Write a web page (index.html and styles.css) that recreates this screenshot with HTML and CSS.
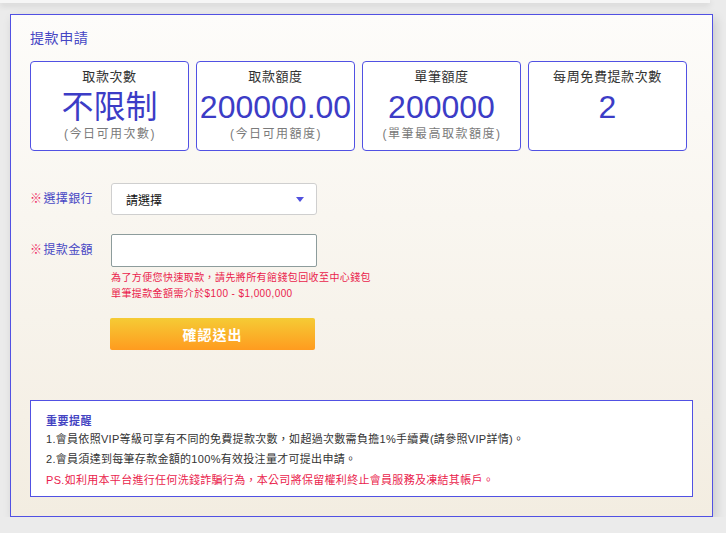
FILE: index.html
```html
<!DOCTYPE html>
<html lang="zh-Hant">
<head>
<meta charset="utf-8">
<title>提款申請</title>
<link rel="stylesheet" href="styles.css">
</head>
<body>
<div class="topbar"></div>
<div class="panel">
  <h2 class="title">提款申請</h2>
  <div class="cards">
    <div class="card">
      <div class="card-label">取款次數</div>
      <div class="card-value">不限制</div>
      <div class="card-sub">(今日可用次數)</div>
    </div>
    <div class="card">
      <div class="card-label">取款額度</div>
      <div class="card-value">200000.00</div>
      <div class="card-sub">(今日可用額度)</div>
    </div>
    <div class="card">
      <div class="card-label">單筆額度</div>
      <div class="card-value">200000</div>
      <div class="card-sub">(單筆最高取款額度)</div>
    </div>
    <div class="card">
      <div class="card-label">每周免費提款次數</div>
      <div class="card-value">2</div>
    </div>
  </div>

  <div class="form">
    <div class="row">
      <label class="label"><span class="mark">※</span>選擇銀行</label>
      <div class="select">
        <span>請選擇</span>
        <svg class="arrow" width="8" height="5" viewBox="0 0 8 5"><path d="M0 0H8L4 5Z" fill="#5151de"/></svg>
      </div>
    </div>
    <div class="row row-amount">
      <label class="label"><span class="mark">※</span>提款金額</label>
      <div class="field">
        <input class="input" type="text">
        <p class="note">為了方便您快速取款，請先將所有館錢包回收至中心錢包</p>
        <p class="note">單筆提款金額需介於$100 - $1,000,000</p>
        <button class="submit" type="button">確認送出</button>
      </div>
    </div>
  </div>

  <div class="notice">
    <div class="notice-title">重要提醒</div>
    <p class="notice-line">1.會員依照VIP等級可享有不同的免費提款次數，如超過次數需負擔1%手續費(請參照VIP詳情)。</p>
    <p class="notice-line">2.會員須達到每筆存款金額的100%有效投注量才可提出申請。</p>
    <p class="notice-line ps">PS.如利用本平台進行任何洗錢詐騙行為，本公司將保留權利終止會員服務及凍結其帳戶。</p>
  </div>
</div>
</body>
</html>
```

FILE: styles.css
```css
* { box-sizing: border-box; }

body {
  margin: 0;
  background: #ebebeb;
  font-family: "Liberation Sans", "Noto Sans CJK TC", sans-serif;
  color: #333;
}

.topbar {
  width: 710px;
  height: 3px;
  background: #f6f6f6;
  box-shadow: 0 2px 6px rgba(0, 0, 0, 0.16);
}

.panel {
  width: 703px;
  height: 503px;
  margin: 11px 0 0 10px;
  border: 1px solid #5151e3;
  background: linear-gradient(#fdfcfa, #f3ede1);
  box-shadow: 3px 4px 10px rgba(0, 0, 0, 0.14);
  padding: 13px 19px 19px 19px;
  display: flex;
  flex-direction: column;
}

.title {
  margin: 0;
  font-size: 14px;
  font-weight: normal;
  line-height: 20px;
  letter-spacing: 0.6px;
  color: #4545c4;
}

.cards {
  display: flex;
  gap: 7px;
  margin-top: 13px;
}

.card {
  width: 159px;
  height: 90px;
  border: 1px solid #5151e3;
  border-radius: 4px;
  background: #fff;
  text-align: center;
  padding-top: 6px;
}

.card-label {
  font-size: 13px;
  line-height: 18px;
  letter-spacing: 0.6px;
  color: #333;
}

.card-value {
  margin-top: 3px;
  font-size: 32px;
  line-height: 37px;
  color: #3c3cc6;
}

.card-sub {
  font-size: 12px;
  line-height: 16px;
  letter-spacing: 1.5px;
  color: #7a7a7a;
  margin-left: 1px;
}

.form {
  margin-top: 32px;
  display: flex;
  flex-direction: column;
  gap: 19px;
}

.row {
  display: flex;
  align-items: center;
}

.row-amount {
  align-items: flex-start;
}

.label {
  width: 81px;
  font-size: 12px;
  line-height: 16px;
  letter-spacing: 0.4px;
  color: #4747c4;
}

.row-amount .label {
  margin-top: 8px;
}

.mark {
  color: #ee2a62;
  margin-right: 1px;
}

.select {
  width: 206px;
  height: 32px;
  border: 1px solid #cfcfcf;
  border-radius: 3px;
  background: #fff;
  display: flex;
  align-items: center;
  justify-content: space-between;
  padding: 0 12px 0 14px;
  font-size: 12px;
  color: #111;
}

.arrow {
  display: block;
}

.field {
  display: flex;
  flex-direction: column;
}

.input {
  width: 206px;
  height: 33px;
  border: 1px solid #8d9c9c;
  border-radius: 2px;
  background: #fff;
  margin: 0 0 3px 0;
  padding: 0 8px;
  font: inherit;
}

.note {
  margin: 0;
  font-size: 10px;
  line-height: 16px;
  letter-spacing: 0.4px;
  color: #ea1c4c;
  white-space: nowrap;
}

.submit {
  margin: 16px 0 0 -1px;
  width: 205px;
  height: 32px;
  border: none;
  border-radius: 2px;
  background: linear-gradient(#f5cb35, #ff9b1f);
  color: #fff;
  font-family: inherit;
  font-size: 14px;
  font-weight: bold;
  letter-spacing: 1px;
  padding: 0;
}

.notice {
  margin-top: auto;
  width: 663px;
  height: 97px;
  border: 1px solid #5151e3;
  background: #fff;
  padding: 11px 15px 0 15px;
}

.notice-title {
  font-size: 11px;
  line-height: 18px;
  font-weight: bold;
  letter-spacing: 0.5px;
  color: #4444c2;
}

.notice-line {
  margin: 0;
  font-size: 11px;
  line-height: 19.5px;
  letter-spacing: 0.3px;
  color: #333;
  white-space: nowrap;
}

.notice-line.ps {
  margin-top: 2px;
  color: #ea1c4c;
}
```
